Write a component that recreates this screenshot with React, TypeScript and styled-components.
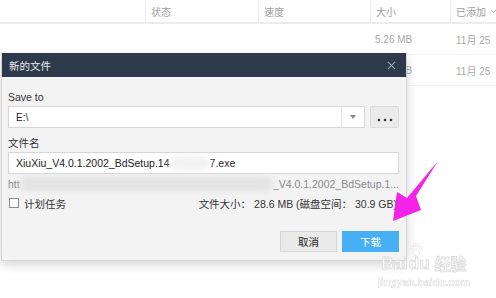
import React from 'react';
import styled, { createGlobalStyle } from 'styled-components';

const columns = [
  { key: 'name', label: '', width: 145 },
  { key: 'status', label: '状态', width: 113 },
  { key: 'speed', label: '速度', width: 112 },
  { key: 'size', label: '大小', width: 80 },
  { key: 'added', label: '已添加', width: 46 },
];

const rows = [
  { size: '5.26 MB', added: '11月 25' },
  { size: '5.26 MB', added: '11月 25' },
];

const GlobalStyle = createGlobalStyle`
  html, body {
    margin: 0;
    padding: 0;
    background: #fff;
  }
  body {
    font-family: "Liberation Sans", "Noto Sans CJK SC", sans-serif;
    font-size: 10.5px;
  }
`;

const App = () => {
  return (
    <Page>
      <GlobalStyle />
      <Table>
        <HeaderRow>
          {columns.map((c) => (
            <HeaderCell key={c.key} $width={c.width} $divider={c.key !== 'name'}>
              {c.label}
              {c.key === 'added' && (
                <SortCaret viewBox="0 0 7 5">
                  <path d="M1 1 L3.5 3.5 L6 1" stroke="#b0b0b0" strokeWidth="1" fill="none" />
                </SortCaret>
              )}
            </HeaderCell>
          ))}
        </HeaderRow>
        {rows.map((r, i) => (
          <Row key={i}>
            <Cell $width={145} />
            <Cell $width={113} />
            <Cell $width={112} />
            <Cell $width={80}>{r.size}</Cell>
            <Cell $width={46}>{r.added}</Cell>
          </Row>
        ))}
      </Table>

      <Dialog>
        <TitleBar>
          <span>新的文件</span>
          <CloseIcon viewBox="0 0 10 10">
            <path d="M1 1 L9 9 M9 1 L1 9" stroke="#9aa3ae" strokeWidth="1.2" />
          </CloseIcon>
        </TitleBar>
        <Body>
          <Label>Save to</Label>
          <PathRow>
            <Select>
              <SelectText>E:\</SelectText>
              <SelectArrow>
                <svg width="6" height="4" viewBox="0 0 6 4">
                  <path d="M0 0 L6 0 L3 4 Z" fill="#8a8a8a" />
                </svg>
              </SelectArrow>
            </Select>
            <BrowseButton>
              <svg width="16" height="4" viewBox="0 0 16 4">
                <circle cx="2" cy="2" r="1.3" fill="#333" />
                <circle cx="8" cy="2" r="1.3" fill="#333" />
                <circle cx="14" cy="2" r="1.3" fill="#333" />
              </svg>
            </BrowseButton>
          </PathRow>

          <Label $cjk>文件名</Label>
          <TextInput>
            XiuXiu_V4.0.1.2002_BdSetup.14
            <Smudge $w={40} $color="#f2f2f2" />
            7.exe
          </TextInput>
          <UrlLine>
            htt
            <Smudge $w={255} $color="#e2e2e2" />
            _V4.0.1.2002_BdSetup.1...
          </UrlLine>

          <InfoRow>
            <CheckLabel>
              <CheckBox />
              计划任务
            </CheckLabel>
            <SizeInfo>文件大小： 28.6 MB (磁盘空间： 30.9 GB)</SizeInfo>
          </InfoRow>

          <Footer>
            <Button>取消</Button>
            <Button $primary>下载</Button>
          </Footer>
        </Body>
      </Dialog>

      <Watermark>
        <WatermarkLogo>
          Bai
          <Paw viewBox="0 0 30 28">
            <g fill="#fff" stroke="#dedede" strokeWidth="1.5">
              <ellipse cx="6" cy="10" rx="3" ry="4" />
              <ellipse cx="12" cy="4" rx="3" ry="3.5" />
              <ellipse cx="19" cy="4" rx="3" ry="3.5" />
              <ellipse cx="25" cy="10" rx="3" ry="4" />
              <path d="M8 24 C8 16 12 13 15.5 13 C19 13 23 16 23 24 C23 27 8 27 8 24 Z" />
            </g>
          </Paw>
          du
          <CjkMark>经验</CjkMark>
        </WatermarkLogo>
        <WatermarkUrl>jingyan.baidu.com</WatermarkUrl>
      </Watermark>

      <Arrow width="496" height="298" viewBox="0 0 496 298">
        <polygon
          points="438,161 416,196 421,210 393,221 397,192 407,198"
          fill="#f522e8"
        />
      </Arrow>
    </Page>
  );
};

const Page = styled.div`
  position: relative;
  width: 496px;
  height: 298px;
  overflow: hidden;
  background: #fff;
`;

const Table = styled.div`
  display: flex;
  flex-direction: column;
`;

const HeaderRow = styled.div`
  display: flex;
  height: 22px;
  border-bottom: 2px solid #ececec;
`;

const HeaderCell = styled.div<{ $width: number; $divider?: boolean }>`
  width: ${(p) => p.$width}px;
  flex-shrink: 0;
  box-sizing: border-box;
  padding-left: 5px;
  display: flex;
  align-items: center;
  gap: 4px;
  font-family: "Noto Sans CJK SC", sans-serif;
  font-size: 10px;
  color: #a0a0a0;
  border-left: ${(p) => (p.$divider ? '1px solid #f0f0f0' : 'none')};
  white-space: nowrap;
  &:last-child {
    flex: 1;
    overflow: visible;
  }
`;

const SortCaret = styled.svg`
  width: 7px;
  height: 5px;
  flex-shrink: 0;
`;

const Row = styled.div`
  display: flex;
  height: 30px;
  border-bottom: 1px solid #f3f3f3;
`;

const Cell = styled.div<{ $width: number }>`
  width: ${(p) => p.$width}px;
  flex-shrink: 0;
  box-sizing: border-box;
  padding-left: 5px;
  display: flex;
  align-items: center;
  font-family: "Liberation Sans", "Noto Sans CJK SC", sans-serif;
  font-size: 10px;
  color: #a8a8a8;
  white-space: nowrap;
  &:last-child {
    flex: 1;
    padding-left: 6px;
  }
`;

const Dialog = styled.div`
  position: absolute;
  left: 1px;
  top: 53px;
  width: 406px;
  height: 208px;
  background: #f3f3f3;
  border: 1px solid #d4d4d4;
  border-top: none;
  box-sizing: border-box;
  box-shadow: 0 4px 10px rgba(0, 0, 0, 0.16);
  display: flex;
  flex-direction: column;
`;

const TitleBar = styled.div`
  height: 24px;
  background: #2e3a4c;
  display: flex;
  align-items: center;
  justify-content: space-between;
  padding: 0 10px 0 7px;
  color: #e8ebef;
  font-family: "Noto Sans CJK SC", sans-serif;
  font-size: 10.5px;
`;

const CloseIcon = styled.svg`
  width: 9px;
  height: 9px;
`;

const Body = styled.div`
  flex: 1;
  display: flex;
  flex-direction: column;
  padding: 12px 7px 8px 6px;
`;

const Label = styled.div<{ $cjk?: boolean }>`
  height: 16px;
  line-height: 16px;
  color: #333;
  font-family: ${(p) => (p.$cjk ? '"Noto Sans CJK SC", sans-serif' : '"Liberation Sans", sans-serif')};
  font-size: 10.5px;
  margin-bottom: 1px;
`;

const PathRow = styled.div`
  display: flex;
  gap: 5px;
  height: 22px;
  margin-bottom: 7px;
`;

const Select = styled.div`
  flex: 1;
  display: flex;
  background: #fff;
  border: 1px solid #d6d6d6;
`;

const SelectText = styled.div`
  flex: 1;
  display: flex;
  align-items: center;
  padding-left: 7px;
  font-size: 10px;
  color: #222;
`;

const SelectArrow = styled.div`
  width: 22px;
  border-left: 1px solid #e3e3e3;
  display: flex;
  align-items: center;
  justify-content: center;
`;

const BrowseButton = styled.div`
  width: 29px;
  box-sizing: border-box;
  background: #ebebeb;
  border: 1px solid #dcdcdc;
  border-radius: 2px;
  display: flex;
  align-items: flex-end;
  justify-content: center;
  padding-bottom: 5px;
`;

const TextInput = styled.div`
  height: 22px;
  box-sizing: border-box;
  background: #fff;
  border: 1px solid #d6d6d6;
  display: flex;
  align-items: center;
  padding-left: 7px;
  font-size: 10.5px;
  color: #222;
  white-space: nowrap;
`;

const Smudge = styled.span<{ $w: number; $color: string }>`
  display: inline-block;
  width: ${(p) => p.$w}px;
  height: 14px;
  background: ${(p) => p.$color};
  border-radius: 7px;
  filter: blur(3px);
`;

const UrlLine = styled.div`
  height: 18px;
  display: flex;
  align-items: center;
  font-size: 10.5px;
  color: #8a8a8a;
  white-space: nowrap;
  margin-top: 1px;
`;

const InfoRow = styled.div`
  height: 20px;
  display: flex;
  align-items: center;
  justify-content: space-between;
  padding-right: 2px;
`;

const CheckLabel = styled.label`
  display: flex;
  align-items: center;
  gap: 5px;
  font-family: "Noto Sans CJK SC", sans-serif;
  font-size: 10.5px;
  color: #333;
`;

const CheckBox = styled.span`
  width: 8px;
  height: 8px;
  border: 1px solid #8c8c8c;
  background: #fff;
  margin-left: 1px;
`;

const SizeInfo = styled.div`
  font-family: "Liberation Sans", "Noto Sans CJK SC", sans-serif;
  font-size: 10.5px;
  color: #333;
`;

const Footer = styled.div`
  margin-top: auto;
  display: flex;
  justify-content: flex-end;
  gap: 5px;
`;

const Button = styled.div<{ $primary?: boolean }>`
  width: 57px;
  height: 21px;
  box-sizing: border-box;
  display: flex;
  align-items: center;
  justify-content: center;
  font-family: "Noto Sans CJK SC", sans-serif;
  font-size: 10.5px;
  color: ${(p) => (p.$primary ? '#fff' : '#222')};
  background: ${(p) => (p.$primary ? '#47b0f4' : '#e9e9e9')};
  border: 1px solid ${(p) => (p.$primary ? '#47b0f4' : '#d6d6d6')};
`;

const Watermark = styled.div`
  position: absolute;
  left: 378px;
  top: 243px;
  width: 92px;
  display: flex;
  flex-direction: column;
  align-items: center;
  white-space: nowrap;
  opacity: 0.9;
`;

const WatermarkLogo = styled.div`
  display: flex;
  align-items: flex-end;
  height: 29px;
  font-family: "Liberation Sans", sans-serif;
  font-size: 17px;
  font-weight: bold;
  line-height: 17px;
  color: #fff;
  -webkit-text-stroke: 1px #dcdcdc;
`;

const Paw = styled.svg`
  width: 14px;
  height: 13px;
  align-self: flex-start;
  margin: 0 -14px 0 1px;
`;

const CjkMark = styled.span`
  font-family: "Noto Sans CJK SC", sans-serif;
  font-size: 16px;
  margin-left: 5px;
`;

const WatermarkUrl = styled.div`
  font-family: "Liberation Sans", sans-serif;
  font-size: 10.5px;
  font-weight: bold;
  color: #fff;
  -webkit-text-stroke: 0.6px #dcdcdc;
  margin-top: 4px;
`;

const Arrow = styled.svg`
  position: absolute;
  left: 0;
  top: 0;
  pointer-events: none;
`;

export default App;
